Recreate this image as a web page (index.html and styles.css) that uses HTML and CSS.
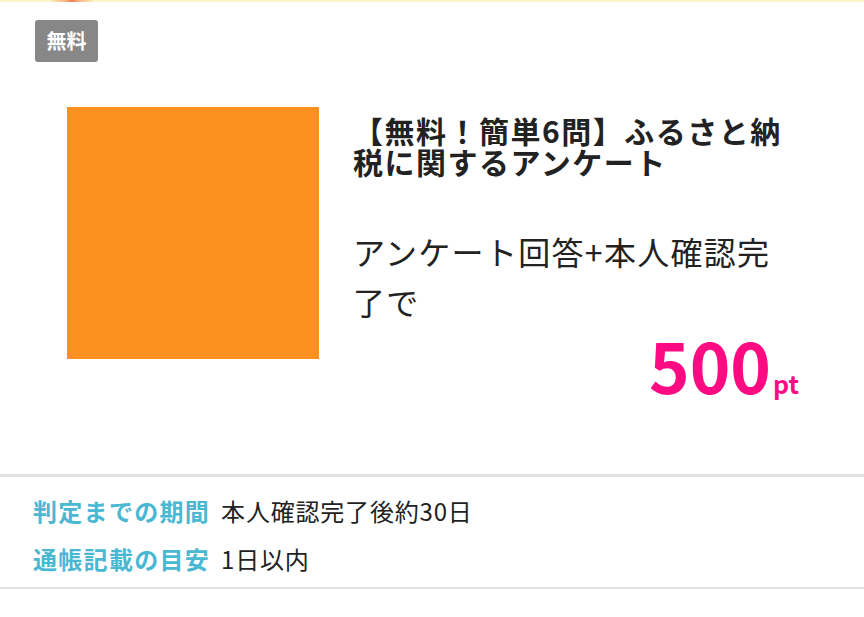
FILE: index.html
```html
<!DOCTYPE html>
<html lang="ja">
<head>
<meta charset="utf-8">
<link rel="stylesheet" href="styles.css">
</head>
<body>
<div class="topbar"><span class="topbar-blob"></span></div>
<main class="card">
  <div class="badge-row"><span class="badge">無料</span></div>
  <div class="product">
    <div class="thumb"></div>
    <div class="info">
      <h1 class="title">【無料！簡単6問】ふるさと納税に関するアンケート</h1>
      <p class="cond">アンケート回答+本人確認完了で</p>
      <div class="price"><span class="price-num">500</span><span class="price-unit">pt</span></div>
    </div>
  </div>
</main>
<section class="details">
  <div class="detail-row"><span class="detail-label">判定までの期間</span><span class="detail-value">本人確認完了後約30日</span></div>
  <div class="detail-row"><span class="detail-label">通帳記載の目安</span><span class="detail-value">1日以内</span></div>
</section>
</body>
</html>
```
FILE: styles.css
```css
* { box-sizing: border-box; }
html, body { margin: 0; padding: 0; background: #fff; }
body {
  font-family: "Noto Sans CJK JP", "Noto Sans", sans-serif;
  color: #222;
  width: 864px;
  height: 617px;
  overflow: hidden;
}
.topbar {
  height: 2px;
  background: #fdf3c8;
  position: relative;
}
.topbar-blob {
  position: absolute;
  left: 52px;
  top: 0;
  width: 40px;
  height: 2px;
  background: linear-gradient(90deg, #fde7b0 0%, #f8b080 35%, #f07a48 50%, #f8b080 65%, #fde7b0 100%);
}
.card {
  padding: 18px 0 0 35px;
  height: 472px;
}
.badge-row { display: flex; }
.badge {
  display: flex;
  align-items: center;
  justify-content: center;
  width: 63px;
  height: 42px;
  background: #878787;
  color: #fff;
  border-radius: 3px;
  font-weight: 700;
  font-size: 20px;
  line-height: 1;
}
.product {
  display: flex;
  margin-top: 45px;
  padding-left: 32px;
}
.thumb {
  width: 252px;
  height: 252px;
  background: #fe9020;
  flex: none;
}
.info {
  margin-left: 34px;
  width: 446px;
  display: flex;
  flex-direction: column;
}
.title {
  margin: 8px 0 0;
  font-size: 30px;
  line-height: 31px;
  font-weight: 700;
  letter-spacing: 1.5px;
  color: #222;
}
.cond {
  margin: 49px 0 0;
  font-size: 32px;
  line-height: 50px;
  font-weight: 400;
  letter-spacing: 1.3px;
  color: #222;
}
.price {
  display: flex;
  justify-content: flex-end;
  align-items: baseline;
  color: #fe0a82;
  font-weight: 700;
  margin-top: 8px;
}
.price-num {
  font-size: 69px;
  line-height: 60px;
}
.price-unit {
  font-size: 25px;
  line-height: 30px;
  margin-left: 2px;
}
.details {
  border-top: 3px solid #e2e2e2;
  border-bottom: 2px solid #e2e2e2;
  padding: 16px 0 10px 33px;
  display: flex;
  flex-direction: column;
  gap: 12px;
}
.detail-row {
  display: flex;
  align-items: baseline;
  font-size: 24px;
  line-height: 36px;
}
.detail-label {
  color: #4ab8d3;
  font-weight: 700;
  letter-spacing: 1.3px;
  margin-right: 11px;
}
.detail-value {
  color: #222;
  letter-spacing: 0.8px;
}
```
